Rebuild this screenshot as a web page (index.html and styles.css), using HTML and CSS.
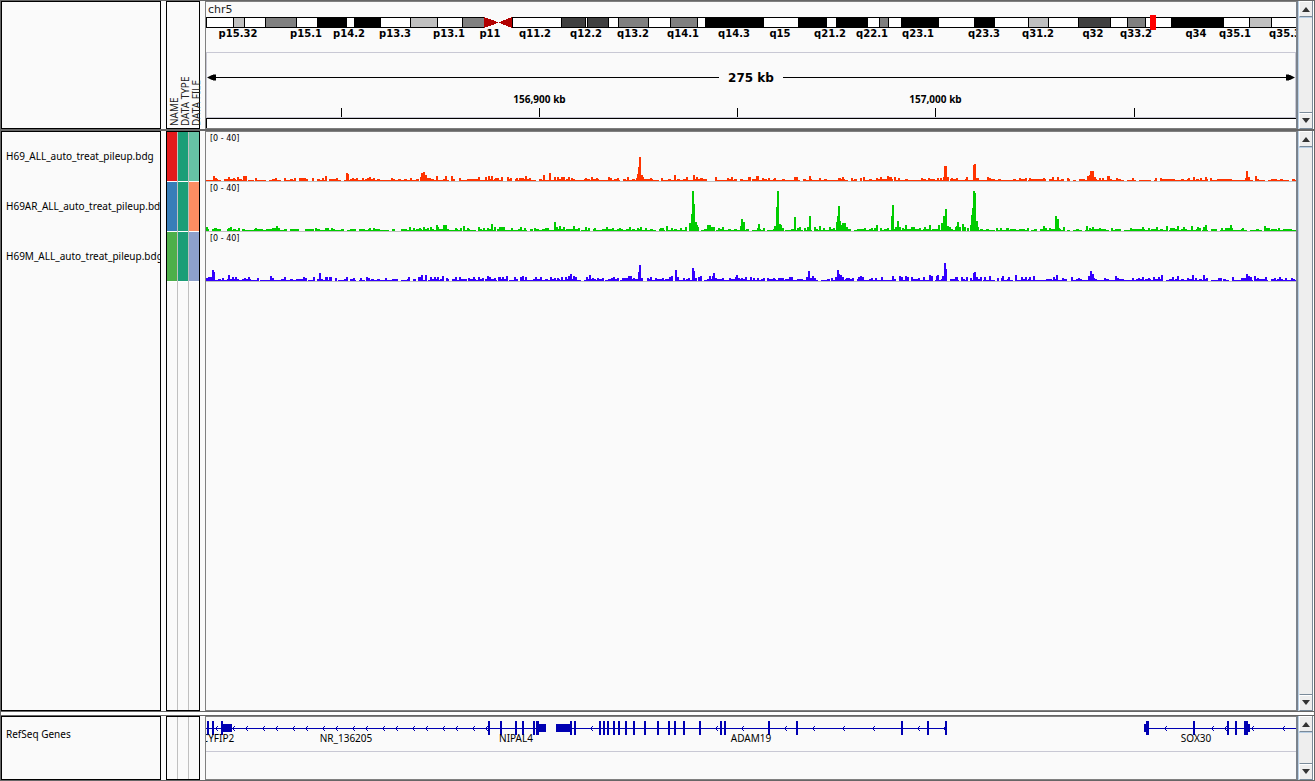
FILE: index.html
```html
<!DOCTYPE html>
<html lang="en">
<head>
    <meta charset="UTF-8">
    <meta name="viewport" content="width=device-width, initial-scale=1.0">
    <title>chr5</title>
    <link rel="stylesheet" href="styles.css">
</head>
<body>
    <section class="row row-header">
        <div class="names"></div>
        <div class="attributes attribute-titles">
            <span>NAME</span>
            <span>DATA TYPE</span>
            <span>DATA FILE</span>
        </div>
        <div class="data">
            <div class="chromosome">chr5</div>
            <svg class="ideogram" id="ideogram" viewBox="206 0 1090 15" preserveAspectRatio="none"></svg>
            <div class="band-labels" id="bandLabels"></div>
            <div class="ruler">
                <div class="span">
                    <svg class="arrow" viewBox="0 0 10 7"><path d="M0 3.5L5 1H6V0.5H9V3H10V4H9V6.5H6V6H5Z"/></svg>
                    <span class="line"></span>
                    <span class="span-text">275 kb</span>
                    <span class="line"></span>
                    <svg class="arrow" viewBox="0 0 10 7"><path d="M10 3.5L5 1H4V0.5H1V3H0V4H1V6.5H4V6H5Z"/></svg>
                </div>
                <div class="ticks" id="ticks"></div>
            </div>
            <div class="sequence"></div>
        </div>
        <div class="scrollbar">
            <button type="button" aria-label="Scroll up"><svg viewBox="0 0 8 5"><path d="M4 0L8 5H0Z"/></svg></button>
            <button type="button" aria-label="Scroll down"><svg viewBox="0 0 8 5"><path d="M0 0H8L4 5Z"/></svg></button>
        </div>
    </section>

    <div class="divider"></div>

    <section class="row row-tracks">
        <div class="names">
            <div class="name">H69_ALL_auto_treat_pileup.bdg</div>
            <div class="name">H69AR_ALL_auto_treat_pileup.bdg</div>
            <div class="name">H69M_ALL_auto_treat_pileup.bdg</div>
        </div>
        <div class="attributes">
            <div class="column">
                <div class="cell red"></div>
                <div class="cell blue"></div>
                <div class="cell green"></div>
            </div>
            <div class="column">
                <div class="cell teal"></div>
                <div class="cell teal"></div>
                <div class="cell teal"></div>
            </div>
            <div class="column">
                <div class="cell mint"></div>
                <div class="cell orange"></div>
                <div class="cell lavender"></div>
            </div>
        </div>
        <div class="data">
            <div class="track">
                <span class="range">[0 - 40]</span>
                <svg class="signal signal-h69" id="h69" viewBox="206 0 1090 49" preserveAspectRatio="none"></svg>
            </div>
            <div class="track">
                <span class="range">[0 - 40]</span>
                <svg class="signal signal-h69ar" id="h69ar" viewBox="206 0 1090 49" preserveAspectRatio="none"></svg>
            </div>
            <div class="track">
                <span class="range">[0 - 40]</span>
                <svg class="signal signal-h69m" id="h69m" viewBox="206 0 1090 49" preserveAspectRatio="none"></svg>
            </div>
        </div>
        <div class="scrollbar">
            <button type="button" aria-label="Scroll up"><svg viewBox="0 0 8 5"><path d="M4 0L8 5H0Z"/></svg></button>
            <button type="button" aria-label="Scroll down"><svg viewBox="0 0 8 5"><path d="M0 0H8L4 5Z"/></svg></button>
        </div>
    </section>

    <div class="divider divider-wide"></div>

    <section class="row row-genes">
        <div class="names">
            <div class="name name-genes">RefSeq Genes</div>
        </div>
        <div class="attributes">
            <div class="column"></div>
            <div class="column"></div>
            <div class="column"></div>
        </div>
        <div class="data">
            <div class="gene-track">
                <svg class="genes" id="genes" viewBox="206 0 1090 34" preserveAspectRatio="none"></svg>
                <div class="gene-labels" id="geneLabels"></div>
            </div>
        </div>
        <div class="scrollbar">
            <button type="button" aria-label="Scroll up"><svg viewBox="0 0 8 5"><path d="M4 0L8 5H0Z"/></svg></button>
            <button type="button" aria-label="Scroll down"><svg viewBox="0 0 8 5"><path d="M0 0H8L4 5Z"/></svg></button>
        </div>
    </section>

    <script src="script.js"></script>
</body>
</html>
```
FILE: styles.css
```css
* {
    box-sizing: border-box;
}

body {
    display: flex;
    flex-direction: column;
    height: 100vh;
    margin: 0;
    border: 1px solid #666;
    background-color: #fafafa;
    color: #000;
    font-family: "Noto Sans", sans-serif;
    font-size: 10px;
    overflow: hidden;
}

svg {
    display: block;
}

.row {
    display: flex;
}

.row-header {
    height: 128px;
}

.row-tracks {
    flex: 1;
    min-height: 0;
}

.row-genes {
    height: 64px;
}

.divider {
    height: 2px;
    background-color: #666;
}

.divider-wide {
    height: 5px;
    background-color: #fff;
    border-top: 1px solid #666;
    border-bottom: 1px solid #666;
}

/* left panels */
.names {
    flex: 0 0 160px;
    margin-right: 5px;
    border: 1px solid #000;
    overflow: hidden;
}

.name {
    height: 50px;
    padding-left: 4px;
    line-height: 48px;
    white-space: nowrap;
}

.name-genes {
    height: 34px;
    line-height: 34px;
}

.attributes {
    display: flex;
    flex: 0 0 34px;
    min-width: 0;
    margin-right: 5px;
    border: 1px solid #000;
}

.attribute-titles {
    padding-left: 2px;
}

.attribute-titles span {
    flex: 0 0 11px;
    padding-top: 2px;
    line-height: 11px;
    color: #222;
    white-space: nowrap;
    writing-mode: vertical-rl;
    transform: rotate(180deg);
}

.column {
    flex: 1 1 11px;
    border-right: 1px solid #c0c0c0;
}

.column:last-child {
    flex: 1 1 10px;
    border-right: none;
}

.cell {
    height: 50px;
    border-bottom: 1px solid #fff;
}

.red { background-color: #e41a1c; }
.blue { background-color: #377eb8; }
.green { background-color: #4daf4a; }
.teal { background-color: #1b9e77; }
.mint { background-color: #66c2a5; }
.orange { background-color: #fc8d62; }
.lavender { background-color: #8da0cb; }

/* data panels */
.data {
    flex: 1;
    min-width: 0;
    border: 1px solid #808080;
    border-right: 2px solid #7a828c;
    overflow: hidden;
}

.chromosome {
    height: 13px;
    padding-left: 2px;
    font-family: "DejaVu Sans", sans-serif;
    font-size: 11px;
    line-height: 16px;
    color: #222;
}

.ideogram {
    width: 100%;
    height: 15px;
    shape-rendering: crispEdges;
}

.band-labels {
    position: relative;
    height: 22px;
    font-family: "DejaVu Sans", sans-serif;
    font-weight: bold;
    line-height: 8px;
}

.band-labels span,
.gene-labels span {
    position: absolute;
    transform: translateX(-50%);
    white-space: nowrap;
}

.ruler {
    display: flex;
    flex-direction: column;
    justify-content: space-between;
    height: 66px;
    border: 1px solid #c8c8d4;
}

.span {
    display: flex;
    align-items: center;
    padding-top: 17px;
}

.span .line {
    flex: 1;
    height: 1px;
    background-color: #000;
}

.span-text {
    height: 15px;
    padding: 0 9px;
    font-family: "DejaVu Sans", sans-serif;
    font-size: 12px;
    font-weight: bold;
    line-height: 16px;
}

.arrow {
    width: 10px;
    height: 7px;
}

.ticks {
    position: relative;
    height: 23px;
    margin: 0 -1px;
}

.tick {
    position: absolute;
    display: flex;
    flex-direction: column;
    align-items: center;
    width: 1px;
    height: 23px;
    font-weight: bold;
    line-height: 10px;
    white-space: nowrap;
}

.tick::after {
    content: "";
    width: 1px;
    height: 9px;
    margin-top: auto;
    background-color: #000;
}

.sequence {
    height: 10px;
    border-top: 1px solid #000;
    border-left: 1px solid #000;
    background-color: #fff;
}

.track {
    position: relative;
    height: 50px;
    border-bottom: 1px solid #c0c0c0;
}

.range {
    position: absolute;
    top: 2px;
    left: 4px;
    font-family: "DejaVu Sans", sans-serif;
    font-size: 8px;
    line-height: 9px;
}

.signal {
    width: 100%;
    height: 49px;
    shape-rendering: crispEdges;
}

.signal-h69 { fill: #ff3300; }
.signal-h69ar { fill: #00cc00; }
.signal-h69m { fill: #3300ff; }

.gene-track {
    position: relative;
    height: 35px;
    border-bottom: 1px solid #c8c8d4;
}

.genes {
    width: 100%;
    height: 34px;
    fill: #0000b2;
    shape-rendering: crispEdges;
}

.gene-labels {
    position: absolute;
    top: 16px;
    left: 0;
    right: 0;
    line-height: 10px;
}

/* scrollbars */
.scrollbar {
    display: flex;
    flex: 0 0 16px;
    flex-direction: column;
    justify-content: space-between;
    border-left: 1px solid #b8cfe5;
    border-right: 1px solid #fff;
    background-color: #eee;
    box-shadow: inset -1px 0 #7a8a99;
}

.scrollbar button {
    display: flex;
    align-items: center;
    justify-content: center;
    height: 16px;
    margin: 0 1px 0 0;
    padding: 0;
    border: 1px solid #fff;
    border-right: none;
    border-bottom: 1px solid #7a8a99;
    background-color: #eee;
    box-shadow: 0 1px #b8cfe5;
}

.scrollbar button:last-child {
    height: 17px;
    border-top: 1px solid #7a8a99;
    box-shadow: inset 0 1px #fff;
}

.scrollbar svg {
    width: 8px;
    height: 5px;
    fill: #333;
}
```
FILE: script.js
```js
var start = 206;
var width = 1090;

function rect(x, y, w, h, fill) {
    var attr = fill ? ' fill="' + fill + '"' : "";
    return '<rect x="' + x + '" y="' + y + '" width="' + w + '" height="' + h + '"' + attr + "/>";
}

function percent(x) {
    return ((x - start) / width * 100) + "%";
}

function addLabels(id, list, className) {
    var html = "";
    list.forEach(function(item) {
        html += '<span class="' + (className || "label") + '" style="left:' + percent(item[1]) + '">' + item[0] + "</span>";
    });
    document.getElementById(id).innerHTML = html;
}

// ideogram: [start, end, stain]
var bands = [
    [233, 245, "#c0c0c0"], [265, 297, "#808080"], [317, 347, "#000"], [354, 381, "#000"],
    [410, 438, "#c0c0c0"], [462, 485, "#808080"], [561, 586, "#404040"], [587, 609, "#404040"],
    [618, 649, "#808080"], [670, 698, "#808080"], [705, 764, "#000"], [798, 827, "#000"],
    [836, 868, "#000"], [879, 889, "#808080"], [901, 939, "#000"], [974, 995, "#000"],
    [1028, 1049, "#c0c0c0"], [1078, 1111, "#404040"], [1127, 1146, "#808080"],
    [1171, 1224, "#000"], [1249, 1272, "#c0c0c0"]
];

var ideogram = rect(206, 2, 1090, 11, "#000") + rect(207, 3, 1089, 9, "#fff");
bands.forEach(function(b) {
    ideogram += rect(b[0], 2, b[1] - b[0], 11, "#000");
    ideogram += rect(b[0] + 1, 3, b[1] - b[0] - 2, 9, b[2]);
});
// centromere
ideogram += rect(484, 2, 28, 11, "#fafafa");
ideogram += '<path d="M484 2L499 7.5L484 13ZM512 2L498 7.5L512 13Z" fill="#b20000"/>';
ideogram += rect(512, 2, 1, 11, "#000");
// current position
ideogram += rect(1150, 0, 6, 15, "#f00");
document.getElementById("ideogram").innerHTML = ideogram;

addLabels("bandLabels", [
    ["p15.32", 238], ["p15.1", 306], ["p14.2", 349], ["p13.3", 395], ["p13.1", 449], ["p11", 490],
    ["q11.2", 535], ["q12.2", 586], ["q13.2", 633], ["q14.1", 683], ["q14.3", 734], ["q15", 780],
    ["q21.2", 830], ["q22.1", 872], ["q23.1", 918], ["q23.3", 984], ["q31.2", 1038], ["q32", 1093],
    ["q33.2", 1136], ["q34", 1196], ["q35.1", 1235], ["q35.3", 1285]
]);

addLabels("ticks", [["", 341], ["156,900 kb", 539], ["", 737], ["157,000 kb", 935], ["", 1134]], "tick");

// signal peaks: x:height or x:height:width
var signals = {
    h69: "213:5 215:3 228:4 233:3 237:4 243:5:4 255:3 275:3 284:3 294:3 299:3:7 312:3 322:3 325:5 336:3 346:8 348:7:1 352:3 356:3 362:3 367:3 369:4 373:3 391:3 " +
        "410:3 420:4 421:8 423:9 425:6 427:3:4 436:5 445:5 451:5 459:3 478:4 485:4 488:5 491:5 495:3:4 501:4 507:4 510:3 516:3 519:3:5 525:5 529:3 543:6 549:8 554:4 557:4 561:4:4 568:4 571:3 585:3 591:4 596:3 608:4 610:3 617:3 627:4 636:3 637:7 638:14 639:24 641:6 642:4 650:3 661:3 674:6 686:4 693:6 696:4 700:3:3 715:4 727:3 731:4 748:4:3 756:5:3 762:3 768:3 774:3 794:4:4 809:5 819:3 838:3:3 842:4 851:3 " +
        "860:3 863:4 876:3 880:4 887:5 889:4:3 894:4 898:3 921:3 928:3 937:3 940:3 943:4 944:15:3 947:4 951:3 956:3 966:4 973:16:1 974:17 976:3:3 987:4 989:3 1019:3 1025:3 1029:3 1043:3 1052:4 1057:4 1067:3 1087:5 1089:6 1090:10:4 1094:4 1099:3 1102:3 1107:5:3 1116:3 1132:3 1155:3 1160:3 1188:3 1193:4 1200:3 1205:4 1210:3 1245:3 1246:10 1248:4 1255:5",
    h69ar: "206:4 214:3:3 228:3 230:4 238:3 255:3 272:3 274:3 276:5 278:3 315:3 325:3:4 331:3 369:3 373:3 " +
        "409:4 413:3 419:3 423:4 427:3 430:4 436:6 438:4:1 443:6:4 455:3 460:3 463:5 467:3 478:4 483:3 487:3 491:7 494:4 499:4:6 511:3 520:4 524:3 534:3 545:3:4 554:9 556:4 559:5 563:4 573:5 578:3 585:4 588:3 594:3 606:4 612:3 619:3 629:4 637:3 640:4 645:3 660:3:4 666:5 671:3 680:3 685:4 689:8 691:17 692:40 694:27:1 695:9 696:6 697:4 707:6:4 711:4 713:4 718:3 722:4 740:5 741:12 743:9 744:6:1 757:3 758:7 763:3 774:5 776:24 777:40 779:7 780:6 782:3 794:14 797:3 799:4 804:3 807:4 809:15 814:4 819:5 823:3 829:4 833:3 836:9 837:15 838:25 840:10:1 841:6 842:8:4 846:4 " +
        "864:3 871:3 874:3 876:6 880:3 887:3 891:15 892:26 895:4 897:10 899:4 902:3 905:6 911:4:4 919:3 924:4 929:6 938:6 941:8 943:15 945:22 947:5 949:4 955:4 956:5 957:9 959:4 962:7 964:4 967:3 970:6 971:16 972:23 973:40 975:38:1 976:10 977:4 996:3 1000:3 1006:3:3 1027:3 1043:5 1045:3 1049:3 1055:15 1057:12 1059:3:1 1063:4 1086:5 1089:3 1092:4 1099:3 1111:3 1130:3 1142:4 1148:3 1156:4 1166:5 1170:3:5 1177:5 1183:4 1191:5 1197:4 1199:3 1203:4 1205:6 1221:3 1225:3:8 1230:6 1242:3 1264:5 1266:3:4 1278:3",
    h69m: "206:3 208:4:4 212:11 214:9:1 222:3 228:6 232:4 235:4 244:3 248:4 257:3 270:5 272:3 284:4 303:4 305:3 313:4 319:8 325:4:3 329:4:3 335:3 346:4 353:3 360:3 366:4 368:3 385:3 " +
        "408:4 418:4:3 421:6 425:6 430:4 434:4 437:4 442:5 446:3 455:4 459:4 468:3 473:4 478:4 482:3 487:5 489:4 494:3 498:4:3 502:4 506:5 514:4 520:4 522:5 525:4 535:4 540:4 550:4 554:3 557:3 561:4 565:4 568:5 570:7 573:5 575:4 586:4 589:6 592:3 597:3 602:3 611:3 613:4 617:3 622:3:8 628:5:4 633:3 638:9 639:16 641:3 647:3 650:4 655:3 662:3 669:4 671:5 675:11 677:4 683:3 688:3 692:13 694:10:1 695:3 698:4 700:5 709:5 712:5 713:8 715:3 722:3 729:3 735:4 736:6 738:3 741:3 745:4 750:4 753:3 757:3 763:3 767:3 773:3 778:3:6 789:4:4 806:4 808:10 810:3 812:5 814:3 831:3 835:4 837:11 839:7:1 840:6 842:4 846:3 848:3 852:3 " +
        "858:4 860:5 862:4 871:3 875:3 881:4 892:5 899:5 901:4 905:5 907:4 911:4 918:3 923:4 929:6 931:5 936:5 937:6 942:5 944:18 946:12:1 955:4:3 961:4 966:4 970:3 973:8 974:9 976:4 980:4 984:4 989:5 997:3 1001:3 1002:5 1008:4 1015:6 1021:4 1025:4 1029:4 1033:5 1053:4 1056:6 1062:3 1071:4 1078:3 1088:5 1090:10 1092:7 1093:3 1104:3 1115:5 1117:3 1132:3 1138:3 1142:4 1148:3 1153:4 1158:4 1161:6 1172:4 1177:5 1187:3 1192:6 1195:3 1203:6 1206:3 1218:3:4 1232:4 1241:3:5 1246:7 1248:5 1250:4 1254:5 1257:3 1265:4 1274:3 1279:4 1285:3 1291:3"
};

Object.keys(signals).forEach(function(id, n) {
    var seed = 17 + n * 31;
    var html = "";
    // low coverage between the peaks
    for (var x = start; x < start + width; x += 3) {
        seed = (seed * 1103 + 12345) % 65536;
        var r = seed / 65536;
        var h = r < 0.14 ? 0 : r < 0.6 ? 1 : 2;
        if (h) {
            html += rect(x, 49 - h, 3, h);
        }
    }
    signals[id].split(" ").forEach(function(peak) {
        var p = peak.split(":");
        html += rect(Number(p[0]), 49 - p[1], p[2] || 2, p[1]);
    });
    document.getElementById(id).innerHTML = html;
});

// genes
var introns = [[206, 546], [556, 947], [1145, 1296]];
var utrs = [[222, 232], [539, 546], [556, 572], [1144, 1147], [1247, 1250]];
var exons = [
    [207, 2], [212, 2], [221, 2], [488, 2], [500, 2], [515, 2], [522, 2], [533, 2], [536, 3],
    [570, 2], [574, 2], [599, 2], [603, 2], [607, 2], [613, 2], [618, 2], [625, 2], [633, 2],
    [644, 2], [657, 2], [668, 2], [674, 2], [683, 2], [699, 2], [720, 2], [724, 2], [768, 2],
    [796, 2], [901, 2], [927, 2], [945, 2], [1146, 3], [1193, 2], [1227, 2], [1235, 2], [1244, 4]
];
var arrows = [
    215, 232, 245, 262, 275, 292, 305, 322, 335, 352, 365, 382, 395, 412, 425, 442, 455, 472, 485,
    590, 715, 741, 784, 812, 842, 872, 917, 943, 1164, 1211, 1224, 1251, 1282
];

var genes = "";
introns.forEach(function(i) {
    genes += rect(i[0], 11, i[1] - i[0], 1);
});
utrs.forEach(function(u) {
    genes += rect(u[0], 7, u[1] - u[0], 8);
});
exons.forEach(function(e) {
    genes += rect(e[0], 4, e[1], 14);
});
arrows.forEach(function(x) {
    genes += rect(x, 11, 1, 1) + rect(x + 1, 10, 1, 3) + rect(x + 2, 9, 1, 1) + rect(x + 2, 13, 1, 1);
});
document.getElementById("genes").innerHTML = genes;

addLabels("geneLabels", [["CYFIP2", 218], ["NR_136205", 346], ["NIPAL4", 516], ["ADAM19", 751], ["SOX30", 1196]]);
```
